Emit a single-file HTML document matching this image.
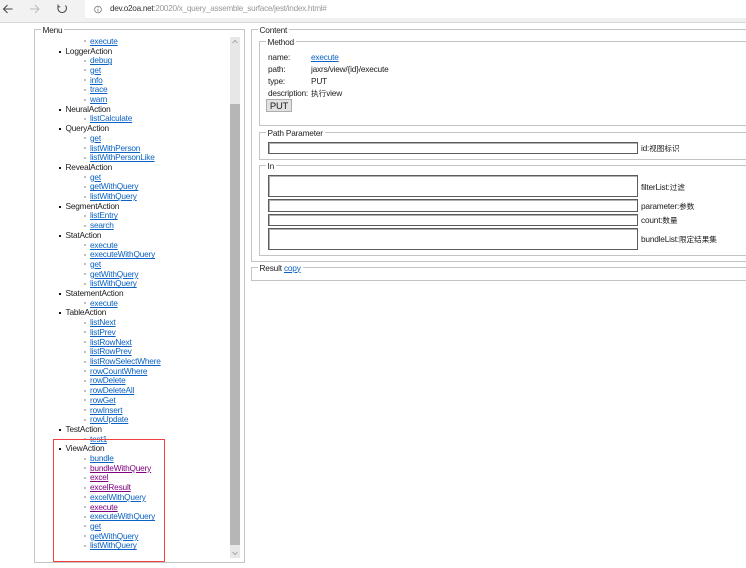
<!DOCTYPE html>
<html><head><meta charset="utf-8"><style>
html,body{margin:0;padding:0;background:#fff;width:746px;height:568px;overflow:hidden}
body{position:relative;font-family:"Liberation Sans","Noto Sans CJK SC",sans-serif;font-size:8.3px;letter-spacing:-.2px;color:#1c1c1c}
.blk{position:absolute;left:0;top:0;width:746px;height:568px;filter:blur(.35px)}
.a{position:absolute;white-space:nowrap}
.f{position:absolute;border:1px solid #c4c4c4;box-sizing:border-box}
.lg{position:absolute;background:#fff;padding:0 2px;line-height:10px;white-space:nowrap;top:-5.5px;left:5.5px}
.in{position:absolute;left:268px;width:370px;box-sizing:border-box;border:1px solid #5c5c5c;box-shadow:inset 1px 1px 0 #b0b0b0;background:#fff}
.c{font-size:7.6px;letter-spacing:0}
a{color:#0b62c4;text-decoration:underline}
a.v{color:#800080}
#list{position:absolute;left:0;top:36.8px;width:228px;height:522px;overflow:hidden}
#list div{height:9.71px;line-height:9.71px;position:relative;white-space:nowrap}
#list .g{padding-left:65.5px}
#list .i{padding-left:90px}
#list .g::before{content:"";position:absolute;left:59px;top:4px;width:2px;height:2px;background:#111}
#list .i::before{content:"";position:absolute;left:83.5px;top:3.5px;width:2px;height:2px;background:#aaa;border-radius:50%}
</style></head><body><div class="blk">
<div class="a" style="left:0;top:0;width:746px;height:18px;background:#fff"></div>
<div class="a" style="left:0;top:18px;width:746px;height:4px;background:#f0f0f0;border-bottom:1px solid #d8d8d8"></div>
<div class="a" style="left:0;top:0;width:85px;height:22px;background:#f2f2f2"></div>
<svg class="a" style="left:0;top:0" width="110" height="22" fill="none">
<path d="M12.5 9H3.5M7.5 5L3.5 9L7.5 13" stroke="#444" stroke-width="1"/>
<path d="M30 9H39M35 5L39 9L35 13" stroke="#bbb" stroke-width="1"/>
<path d="M65.5 5.5A4.3 4.3 0 1 1 58.5 6M58 4.5V6.8H60.3" stroke="#444" stroke-width="1"/>
<circle cx="98" cy="9.5" r="3.4" stroke="#777" stroke-width=".8"/><path d="M98 8.8V11.6M98 7.2V8" stroke="#777" stroke-width=".8"/>
</svg>
<div class="a" style="left:110px;top:3.5px;line-height:10px;color:#999;font-size:8.2px;letter-spacing:-.28px"><span style="color:#333">dev.o2oa.net</span>:20020/x_query_assemble_surface/jest/index.html#</div>

<div class="f" style="left:34px;top:29px;width:211px;height:534px"><span class="lg">Menu</span></div>
<div id="list">
<div class="i"><a href="#">execute</a></div>
<div class="g">LoggerAction</div>
<div class="i"><a href="#">debug</a></div>
<div class="i"><a href="#">get</a></div>
<div class="i"><a href="#">info</a></div>
<div class="i"><a href="#">trace</a></div>
<div class="i"><a href="#">warn</a></div>
<div class="g">NeuralAction</div>
<div class="i"><a href="#">listCalculate</a></div>
<div class="g">QueryAction</div>
<div class="i"><a href="#">get</a></div>
<div class="i"><a href="#">listWithPerson</a></div>
<div class="i"><a href="#">listWithPersonLike</a></div>
<div class="g">RevealAction</div>
<div class="i"><a href="#">get</a></div>
<div class="i"><a href="#">getWithQuery</a></div>
<div class="i"><a href="#">listWithQuery</a></div>
<div class="g">SegmentAction</div>
<div class="i"><a href="#">listEntry</a></div>
<div class="i"><a href="#">search</a></div>
<div class="g">StatAction</div>
<div class="i"><a href="#">execute</a></div>
<div class="i"><a href="#">executeWithQuery</a></div>
<div class="i"><a href="#">get</a></div>
<div class="i"><a href="#">getWithQuery</a></div>
<div class="i"><a href="#">listWithQuery</a></div>
<div class="g">StatementAction</div>
<div class="i"><a href="#">execute</a></div>
<div class="g">TableAction</div>
<div class="i"><a href="#">listNext</a></div>
<div class="i"><a href="#">listPrev</a></div>
<div class="i"><a href="#">listRowNext</a></div>
<div class="i"><a href="#">listRowPrev</a></div>
<div class="i"><a href="#">listRowSelectWhere</a></div>
<div class="i"><a href="#">rowCountWhere</a></div>
<div class="i"><a href="#">rowDelete</a></div>
<div class="i"><a href="#">rowDeleteAll</a></div>
<div class="i"><a href="#">rowGet</a></div>
<div class="i"><a href="#">rowInsert</a></div>
<div class="i"><a href="#">rowUpdate</a></div>
<div class="g">TestAction</div>
<div class="i"><a href="#">test1</a></div>
<div class="g">ViewAction</div>
<div class="i"><a href="#">bundle</a></div>
<div class="i"><a class="v" href="#">bundleWithQuery</a></div>
<div class="i"><a class="v" href="#">excel</a></div>
<div class="i"><a class="v" href="#">excelResult</a></div>
<div class="i"><a href="#">excelWithQuery</a></div>
<div class="i"><a class="v" href="#">execute</a></div>
<div class="i"><a href="#">executeWithQuery</a></div>
<div class="i"><a href="#">get</a></div>
<div class="i"><a href="#">getWithQuery</a></div>
<div class="i"><a href="#">listWithQuery</a></div>
</div>
<div class="a" style="left:230px;top:37px;width:10px;height:521px;background:#e7e7e7"></div>
<div class="a" style="left:230px;top:104px;width:10px;height:441px;background:#b6b6b6"></div>
<svg class="a" style="left:230px;top:37px" width="10" height="521" fill="none"><path d="M2.5 6L5 3.5L7.5 6" stroke="#999" stroke-width=".8"/><path d="M2.5 515L5 517.5L7.5 515" stroke="#999" stroke-width=".8"/></svg>
<div class="a" style="left:53px;top:439px;width:112px;height:123px;border:1px solid #f04040;box-sizing:border-box"></div>

<div class="f" style="left:251px;top:29px;width:520px;height:233px"><span class="lg">Content</span></div>
<div class="f" style="left:259px;top:41px;width:520px;height:85px"><span class="lg">Method</span></div>
<div class="a" style="left:268px;top:52px;line-height:10px">name:</div>
<div class="a" style="left:311px;top:52px;line-height:10px"><a href="#">execute</a></div>
<div class="a" style="left:268px;top:64px;line-height:10px">path:</div>
<div class="a" style="left:311px;top:64px;line-height:10px">jaxrs/view/{id}/execute</div>
<div class="a" style="left:268px;top:76px;line-height:10px">type:</div>
<div class="a" style="left:311px;top:76px;line-height:10px">PUT</div>
<div class="a" style="left:268px;top:88px;line-height:10px">description:</div>
<div class="a" style="left:311px;top:88px;line-height:10px"><span class="c">执行</span>view</div>
<div class="a" style="left:266px;top:99px;width:26px;height:13px;background:#e1e1e1;border:1px solid #adadad;box-sizing:border-box;text-align:center;line-height:11px;font-size:9.4px">PUT</div>

<div class="f" style="left:259px;top:132px;width:520px;height:28px"><span class="lg">Path Parameter</span></div>
<div class="in" style="top:142px;height:12px"></div>
<div class="a" style="left:641px;top:143px;line-height:10px">id:<span class="c">视图标识</span></div>

<div class="f" style="left:259px;top:165px;width:520px;height:91px"><span class="lg">In</span></div>
<div class="in" style="top:175px;height:22px"></div>
<div class="in" style="top:199px;height:13px"></div>
<div class="in" style="top:214px;height:12px"></div>
<div class="in" style="top:228px;height:22px"></div>
<div class="a" style="left:641px;top:182px;line-height:10px">filterList:<span class="c">过滤</span></div>
<div class="a" style="left:641px;top:201px;line-height:10px">parameter:<span class="c">参数</span></div>
<div class="a" style="left:641px;top:215px;line-height:10px">count:<span class="c">数量</span></div>
<div class="a" style="left:641px;top:234px;line-height:10px">bundleList:<span class="c">限定结果集</span></div>

<div class="f" style="left:251px;top:267px;width:520px;height:14px"><span class="lg">Result <a href="#">copy</a></span></div>
</div></body></html>
